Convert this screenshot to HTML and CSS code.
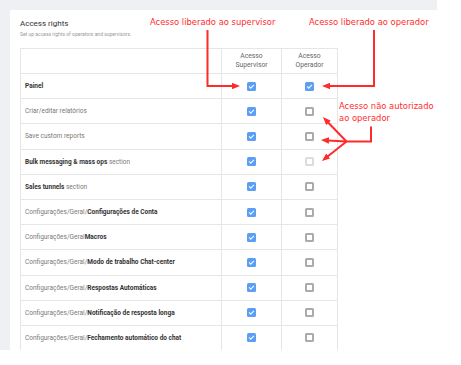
FILE: index.html
```html
<!DOCTYPE html>
<html lang="pt">
<head>
    <meta charset="UTF-8">
    <title>Access rights</title>
    <link rel="stylesheet" href="styles.css">
</head>
<body>
    <div class="shot">
        <div class="card">
            <h1 class="title">Access rights</h1>
            <p class="subtitle">Set up access rights of operators and supervisors.</p>

            <table class="rights">
                <thead>
                    <tr>
                        <th class="name"></th>
                        <th>Acesso<br>Supervisor</th>
                        <th>Acesso<br>Operador</th>
                    </tr>
                </thead>
                <tbody>
                    <tr>
                        <td class="name"><b>Painel</b></td>
                        <td><span class="cb on"></span></td>
                        <td><span class="cb on"></span></td>
                    </tr>
                    <tr>
                        <td class="name">Criar/editar relatórios</td>
                        <td><span class="cb on"></span></td>
                        <td><span class="cb"></span></td>
                    </tr>
                    <tr>
                        <td class="name">Save custom reports</td>
                        <td><span class="cb on"></span></td>
                        <td><span class="cb"></span></td>
                    </tr>
                    <tr>
                        <td class="name"><b>Bulk messaging &amp; mass ops</b> section</td>
                        <td><span class="cb on"></span></td>
                        <td><span class="cb off"></span></td>
                    </tr>
                    <tr>
                        <td class="name"><b>Sales tunnels</b> section</td>
                        <td><span class="cb on"></span></td>
                        <td><span class="cb"></span></td>
                    </tr>
                    <tr>
                        <td class="name">Configurações/Geral/<b>Configurações de Conta</b></td>
                        <td><span class="cb on"></span></td>
                        <td><span class="cb"></span></td>
                    </tr>
                    <tr>
                        <td class="name">Configurações/Geral<b>Macros</b></td>
                        <td><span class="cb on"></span></td>
                        <td><span class="cb"></span></td>
                    </tr>
                    <tr>
                        <td class="name">Configurações/Geral/<b>Modo de trabalho Chat-center</b></td>
                        <td><span class="cb on"></span></td>
                        <td><span class="cb"></span></td>
                    </tr>
                    <tr>
                        <td class="name">Configurações/Geral/<b>Respostas Automáticas</b></td>
                        <td><span class="cb on"></span></td>
                        <td><span class="cb"></span></td>
                    </tr>
                    <tr>
                        <td class="name">Configurações/Geral/<b>Notificação de resposta longa</b></td>
                        <td><span class="cb on"></span></td>
                        <td><span class="cb"></span></td>
                    </tr>
                    <tr>
                        <td class="name">Configurações/Geral/<b>Fechamento automático do chat</b></td>
                        <td><span class="cb on"></span></td>
                        <td><span class="cb"></span></td>
                    </tr>
                </tbody>
            </table>
        </div>
    </div>

    <!-- red annotations drawn over the screenshot -->
    <div class="note note-sup">Acesso liberado ao supervisor</div>
    <div class="note note-op">Acesso liberado ao operador</div>
    <div class="note note-deny">Acesso não autorizado<br>ao operador</div>

    <svg class="arrows" width="461" height="365" viewBox="0 0 461 365">
        <defs>
            <marker id="head" viewBox="0 0 10 8" refX="2" refY="4" markerWidth="4" markerHeight="3.2" orient="auto">
                <path d="M0 0 L10 4 L0 8 z" fill="#ff2a2a"/>
            </marker>
        </defs>
        <g fill="none" stroke="#ff2a2a" stroke-width="2">
            <path d="M207.5 30 V86 H233.6" marker-end="url(#head)"/>
            <path d="M374 30 V86 H328.4" marker-end="url(#head)"/>
            <path d="M371 126.5 V141.5 H346.5"/>
            <path d="M346.5 141.5 L327.4 121.7" marker-end="url(#head)"/>
            <path d="M346.5 141.5 L327.4 140.4" marker-end="url(#head)"/>
            <path d="M346.5 141.5 L327 157" marker-end="url(#head)"/>
        </g>
    </svg>
</body>
</html>
```

FILE: styles.css
```css
body {
    margin: 0;
    background: #fff;
    font-family: Roboto, "Liberation Sans", sans-serif;
    position: relative;
    width: 461px;
    height: 365px;
    overflow: hidden;
}
.shot {
    width: 437px;
    height: 350px;
    box-sizing: border-box;
    padding: 10px 0 0 10px;
    background: #eef0f3;
    overflow: hidden;
}
.card {
    height: 100%;
    box-sizing: border-box;
    background: #fff;
    padding: 9px 0 0 10px;
}
.title {
    margin: 0;
    font-size: 8px;
    line-height: 10px;
    font-weight: 400;
    color: #333;
}
.subtitle {
    margin: 2px 0 0;
    font-size: 5px;
    line-height: 7px;
    color: #999;
}
.rights {
    margin-top: 10px;
    border-collapse: collapse;
    width: 318px;
    table-layout: fixed;
}
.rights th,
.rights td {
    border: 1px solid #e6e6e6;
    padding: 0;
    text-align: center;
    vertical-align: middle;
}
.rights th {
    height: 24px;
    font-size: 6.8px;
    line-height: 9.5px;
    font-weight: 400;
    color: #666;
}
.rights th:nth-child(2) { width: 59px; }
.rights th:nth-child(3) { width: 55px; }
.rights td {
    height: 24.2px;
    font-size: 6.5px;
    color: #7d7876;
}
.rights .name {
    text-align: left;
    padding-left: 4px;
}
.rights b {
    color: #333;
    font-weight: 700;
}
.cb {
    display: inline-flex;
    align-items: center;
    justify-content: center;
    width: 9px;
    height: 9px;
    box-sizing: border-box;
    border: 2px solid #ababab;
    border-radius: 1.5px;
    vertical-align: middle;
}
.cb.on {
    background: #5b9ef4;
    border: none;
}
.cb.on::after {
    content: '';
    width: 4px;
    height: 2px;
    border-left: 1px solid #fff;
    border-bottom: 1px solid #fff;
    transform: translateY(-0.5px) rotate(-45deg);
}
.cb.off {
    border-color: #dcdcdc;
}
.note {
    position: absolute;
    font-family: "DejaVu Sans", sans-serif;
    font-size: 8.4px;
    line-height: 12.5px;
    color: #ff2a2a;
    white-space: nowrap;
}
.note-sup { left: 150px; top: 15.5px; }
.note-op { left: 309px; top: 15.5px; }
.note-deny { left: 339px; top: 99.5px; }
.arrows {
    position: absolute;
    left: 0;
    top: 0;
    pointer-events: none;
}
```
